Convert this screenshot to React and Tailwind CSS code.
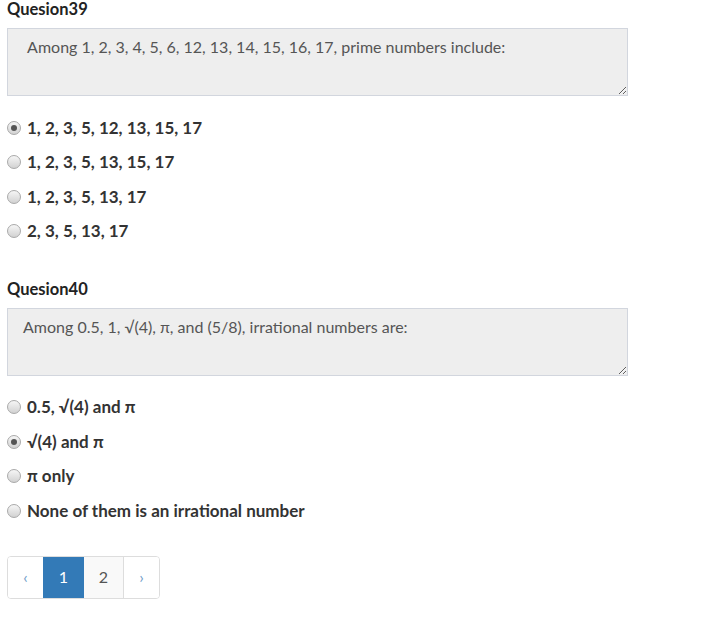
import { useState } from "react";

const questions = [
  {
    title: "Quesion39",
    text: " Among 1, 2, 3, 4, 5, 6, 12, 13, 14, 15, 16, 17, prime numbers include:",
    options: ["1, 2, 3, 5, 12, 13, 15, 17", "1, 2, 3, 5, 13, 15, 17", "1, 2, 3, 5, 13, 17", "2, 3, 5, 13, 17"],
    picked: 0,
  },
  {
    title: "Quesion40",
    text: "Among 0.5, 1, √(4), π, and (5/8), irrational numbers are:",
    options: ["0.5, √(4) and π", "√(4) and π", "π only", "None of them is an irrational number"],
    picked: 1,
  },
];

function Radio({ checked }) {
  return (
    <span className="w-[14px] h-[14px] rounded-full border border-[#a9a9a9] bg-gradient-to-b from-[#f6f6f6] to-[#d2d2d2] flex items-center justify-center shrink-0">
      {checked && <span className="w-[6px] h-[6px] rounded-full bg-[#555]" />}
    </span>
  );
}

function Question({ q }) {
  const [picked, setPicked] = useState(q.picked);
  return (
    <div>
      <h4 className="text-[16.5px] font-bold text-[#222] leading-[18px] mb-[10px]">{q.title}</h4>
      <textarea
        readOnly
        defaultValue={q.text}
        className="block w-[621px] h-[68px] bg-[#eeeeee] border border-[#d2d6de] px-[15px] pt-[6px] text-[16px] leading-[24px] text-[#555] outline-none resize-y"
      />
      <div className="mt-[19.5px] flex flex-col gap-[10.5px]">
        {q.options.map((opt, i) => (
          <label key={i} className="flex items-center gap-[6px] h-[24px] cursor-pointer" onClick={() => setPicked(i)}>
            <Radio checked={picked === i} />
            <span className="text-[17px] font-bold text-[#333]">{opt}</span>
          </label>
        ))}
      </div>
    </div>
  );
}

export default function App() {
  return (
    <div className="bg-white min-h-screen pl-[7px] font-['Lato',sans-serif]">
      <div className="flex flex-col gap-[36.5px]">
        {questions.map((q) => (
          <Question key={q.title} q={q} />
        ))}
      </div>
      <ul className="flex w-fit mt-[33px] border border-[#ddd] rounded-[4px] overflow-hidden text-[16px] h-[43px]">
        <li className="w-[35px] flex items-center justify-center text-[#6f9bc8] bg-white">‹</li>
        <li className="w-[41px] flex items-center justify-center text-white bg-[#337ab7]">1</li>
        <li className="w-[40px] flex items-center justify-center text-[#555] bg-[#f9f9f9] border-r border-[#ddd]">2</li>
        <li className="w-[35px] flex items-center justify-center text-[#6f9bc8] bg-white">›</li>
      </ul>
    </div>
  );
}
